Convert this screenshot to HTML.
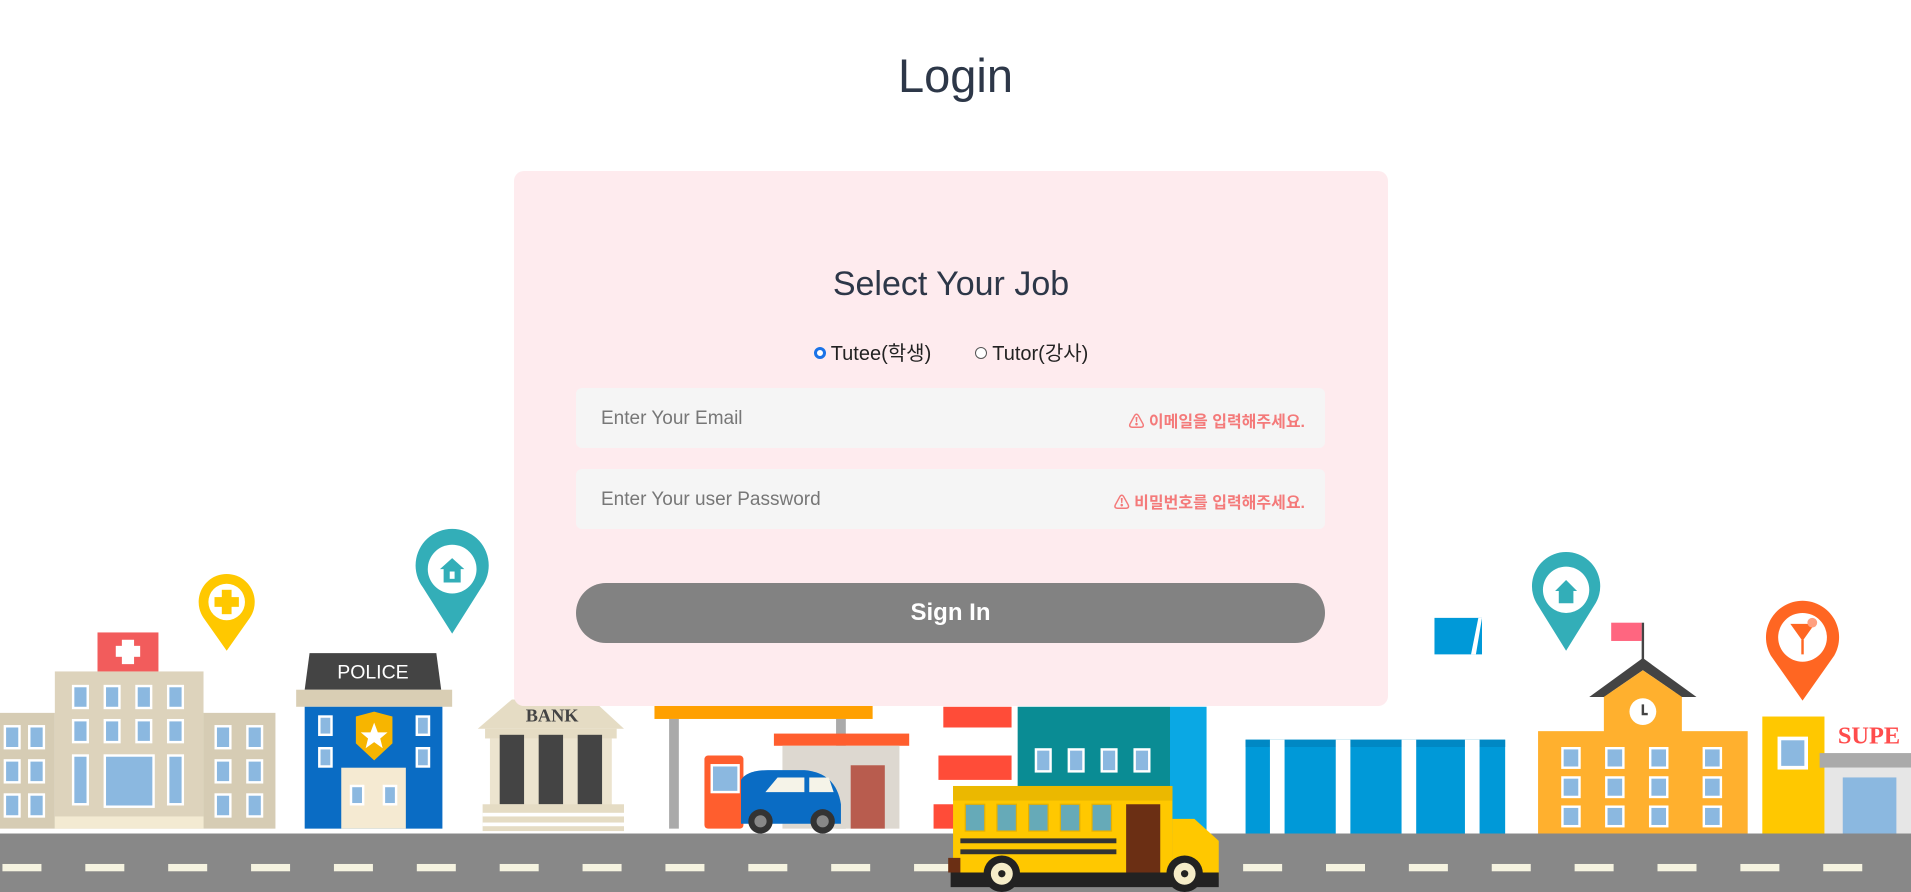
<!DOCTYPE html>
<html><head><meta charset="utf-8"><style>
html,body{margin:0;padding:0;width:1911px;height:892px;overflow:hidden;background:#fff;font-family:"Liberation Sans","Noto Sans CJK KR",sans-serif;}
#city{position:absolute;left:0;top:0;width:1911px;height:892px;}
h1{position:absolute;top:48px;left:0;width:1911px;text-align:center;margin:0;font-size:47px;font-weight:normal;color:#2d3748;}
.card{position:absolute;left:514px;top:171px;width:874px;height:535px;background:#feebee;border-radius:10px;}
.job{position:absolute;top:94px;left:0;width:100%;text-align:center;font-size:34px;color:#2d3748;}
.radios{position:absolute;top:166px;left:0;width:100%;text-align:center;font-size:20px;color:#222;}
.radios span{display:inline-block;margin:0 22px;}
.radios i{display:inline-block;width:12px;height:12px;border:1px solid #555;border-radius:50%;margin-right:5px;vertical-align:1px;background:#fff;box-sizing:border-box}
.radios i.on{border:3px solid #1a73e8;}
.inp{position:absolute;left:62px;width:749px;height:60px;background:#f5f5f5;border-radius:6px;}
.inp .ph{position:absolute;left:25px;top:20px;font-size:19px;color:#777;}
.inp .err{position:absolute;right:20px;top:20px;font-size:16px;color:#f47a7a;font-weight:bold;}
.btn{position:absolute;left:62px;top:412px;width:749px;height:60px;border-radius:30px;background:#828282;color:#fff;text-align:center;line-height:60px;font-size:24px;font-weight:bold;}
</style></head><body>
<svg id="city" viewBox="0 0 1568 732" preserveAspectRatio="none" xmlns="http://www.w3.org/2000/svg">
<rect x="0" y="585" width="45" height="95" fill="#d6ccb4"/>
<rect x="167" y="585" width="59" height="95" fill="#d6ccb4"/>
<rect x="45" y="551" width="122" height="129" fill="#ddd3bc"/>
<rect x="80" y="519" width="50" height="32" fill="#f25c5c"/>
<rect x="100" y="525" width="10" height="20" fill="#fff"/><rect x="95" y="530" width="20" height="9" fill="#fff"/>
<g fill="#8bb8e0" stroke="#fff" stroke-width="2">
<rect x="60" y="563" width="12" height="18"/><rect x="86" y="563" width="12" height="18"/><rect x="112" y="563" width="12" height="18"/><rect x="138" y="563" width="12" height="18"/>
<rect x="60" y="591" width="12" height="18"/><rect x="86" y="591" width="12" height="18"/><rect x="112" y="591" width="12" height="18"/><rect x="138" y="591" width="12" height="18"/>
<rect x="60" y="620" width="12" height="40"/><rect x="86" y="620" width="40" height="42"/><rect x="138" y="620" width="12" height="40"/>
<rect x="4" y="596" width="12" height="18"/><rect x="24" y="596" width="12" height="18"/><rect x="4" y="624" width="12" height="18"/><rect x="24" y="624" width="12" height="18"/><rect x="4" y="652" width="12" height="18"/><rect x="24" y="652" width="12" height="18"/>
<rect x="177" y="596" width="12" height="18"/><rect x="203" y="596" width="12" height="18"/><rect x="177" y="624" width="12" height="18"/><rect x="203" y="624" width="12" height="18"/><rect x="177" y="652" width="12" height="18"/><rect x="203" y="652" width="12" height="18"/>
</g>
<rect x="45" y="670" width="122" height="10" fill="#f3ead2"/>
<path d="M186 534 L167 507 A23 23 0 1 1 205 507 Z" fill="#ffc800"/><circle cx="186" cy="494" r="15" fill="#fff"/><rect x="182" y="484" width="8" height="20" fill="#ffc800"/><rect x="176" y="490" width="20" height="8" fill="#ffc800"/>
<path d="M371 520 L347 482 A30 30 0 1 1 395 482 Z" fill="#33aeb8"/><circle cx="371" cy="467" r="20" fill="#fff"/><path d="M361 467 L371 458 L381 467 L378 467 L378 478 L364 478 L364 467Z" fill="#33aeb8"/><rect x="369" y="469" width="4" height="6" fill="#fff"/>
<path d="M1285 534 L1262 497 A28 28 0 1 1 1308 497 Z" fill="#33aeb8"/><circle cx="1285" cy="484" r="19" fill="#fff"/><path d="M1276 485 L1285 476 L1294 485 L1291 485 L1291 495 L1279 495 L1279 485Z" fill="#33aeb8"/>
<path d="M1479 575 L1453 538 A30 30 0 1 1 1505 538 Z" fill="#ff6622"/><circle cx="1479" cy="523" r="20" fill="#fff"/><path d="M1469 512 L1489 512 L1479 526Z" fill="#ff6622"/><rect x="1478" y="525" width="2" height="12" fill="#ff6622"/><circle cx="1487" cy="511" r="4" fill="#ffa080"/>
<path d="M254 536 L358 536 L362 566 L250 566Z" fill="#444"/>
<text x="306" y="557" font-size="16" fill="#fff" text-anchor="middle" font-family="Liberation Sans">POLICE</text>
<rect x="243" y="566" width="128" height="14" fill="#d9ceb4"/>
<rect x="250" y="580" width="113" height="100" fill="#0a6cc4"/>
<rect x="280" y="630" width="53" height="50" fill="#f5ead2"/>
<g fill="#8bb8e0" stroke="#fff" stroke-width="2"><rect x="262" y="588" width="10" height="15"/><rect x="342" y="588" width="10" height="15"/><rect x="262" y="614" width="10" height="15"/><rect x="342" y="614" width="10" height="15"/><rect x="288" y="645" width="10" height="15"/><rect x="315" y="645" width="10" height="15"/></g>
<path d="M292 588 L307 584 L322 588 L322 610 L307 624 L292 610Z" fill="#f7b500"/><path d="M307 593 L310 601 L318 601 L312 606 L314 614 L307 609 L300 614 L302 606 L296 601 L304 601Z" fill="#fff"/>
<path d="M392 598 L420 574 L486 574 L512 598Z" fill="#e5dcc4"/>
<text x="453" y="592" font-size="15" fill="#444" text-anchor="middle" font-family="Liberation Serif" font-weight="bold">BANK</text>
<rect x="398" y="598" width="108" height="8" fill="#e5dcc4"/>
<rect x="402" y="606" width="100" height="56" fill="#ece4cf"/>
<rect x="410" y="603" width="20" height="57" fill="#444"/><rect x="442" y="603" width="20" height="57" fill="#444"/><rect x="474" y="603" width="20" height="57" fill="#444"/>
<rect x="396" y="660" width="116" height="22" fill="#e5dcc4"/><rect x="396" y="667" width="116" height="3" fill="#fff"/><rect x="396" y="675" width="116" height="3" fill="#fff"/>
<rect x="537" y="578" width="179" height="12" fill="#ffa000"/>
<rect x="549" y="590" width="8" height="90" fill="#aaa"/><rect x="686" y="590" width="8" height="90" fill="#aaa"/>
<rect x="635" y="602" width="111" height="10" fill="#ff5e2e"/>
<rect x="642" y="612" width="96" height="68" fill="#ddd8d0"/>
<rect x="698" y="628" width="28" height="52" fill="#b85c4e"/>
<rect x="578" y="620" width="32" height="60" rx="3" fill="#ff5e2e"/><rect x="584" y="628" width="22" height="22" fill="#8bb8e0" stroke="#fff" stroke-width="2"/>
<path d="M608 640 Q613 632 630 632 L660 632 Q686 634 690 660 L690 676 L608 676Z" fill="#0a6cc4"/>
<path d="M628 650 L638 638 L660 638 L660 650Z" fill="#f5f3e8"/><path d="M664 638 L680 638 L684 650 L664 650Z" fill="#f5f3e8"/>
<circle cx="624" cy="674" r="10" fill="#333"/><circle cx="624" cy="674" r="5" fill="#888"/><circle cx="675" cy="674" r="10" fill="#333"/><circle cx="675" cy="674" r="5" fill="#888"/>
<rect x="774" y="580" width="56" height="17" fill="#ff4c38"/><rect x="770" y="620" width="60" height="20" fill="#ff4c38"/><rect x="766" y="660" width="20" height="20" fill="#ff4c38"/>
<rect x="835" y="580" width="125" height="100" fill="#0a8c94"/><rect x="960" y="580" width="30" height="104" fill="#0aa8e4"/>
<g fill="#8bb8e0" stroke="#fff" stroke-width="2"><rect x="850" y="615" width="12" height="18"/><rect x="877" y="615" width="12" height="18"/><rect x="904" y="615" width="12" height="18"/><rect x="931" y="615" width="12" height="18"/></g>
<rect x="1022" y="607" width="213" height="77" fill="#0099d8"/>
<rect x="1022" y="607" width="213" height="6" fill="#0088c4"/>
<rect x="1042" y="607" width="12" height="77" fill="#fff"/><rect x="1096" y="607" width="12" height="77" fill="#fff"/><rect x="1150" y="607" width="12" height="77" fill="#fff"/><rect x="1202" y="607" width="12" height="77" fill="#fff"/>
<path d="M1177 507 L1216 507 L1216 537 L1177 537Z" fill="#0099d8"/><path d="M1207 537 L1213 507 L1216 507 L1211 537Z" fill="#fff"/>
<rect x="1262" y="600" width="172" height="84" fill="#ffb02e"/>
<rect x="1316" y="568" width="64" height="40" fill="#ffb02e"/>
<path d="M1304 572 L1348 540 L1392 572 L1380 572 L1348 550 L1316 572Z" fill="#444"/>
<path d="M1316 572 L1348 550 L1380 572Z" fill="#ffb02e"/>
<circle cx="1348" cy="584" r="11" fill="#fff"/><path d="M1348 578 L1348 586 L1352 586" stroke="#444" stroke-width="2" fill="none"/>
<rect x="1347" y="511" width="2" height="30" fill="#444"/><rect x="1322" y="511" width="25" height="15" fill="#ff6680"/>
<g fill="#8bb8e0" stroke="#fff" stroke-width="2">
<rect x="1282" y="614" width="14" height="16"/><rect x="1318" y="614" width="14" height="16"/><rect x="1354" y="614" width="14" height="16"/><rect x="1398" y="614" width="14" height="16"/>
<rect x="1282" y="638" width="14" height="16"/><rect x="1318" y="638" width="14" height="16"/><rect x="1354" y="638" width="14" height="16"/><rect x="1398" y="638" width="14" height="16"/>
<rect x="1282" y="662" width="14" height="16"/><rect x="1318" y="662" width="14" height="16"/><rect x="1354" y="662" width="14" height="16"/><rect x="1398" y="662" width="14" height="16"/>
</g>
<rect x="1446" y="588" width="51" height="96" fill="#ffc800"/>
<rect x="1460" y="606" width="22" height="24" fill="#8bb8e0" stroke="#fff" stroke-width="3"/>
<text x="1508" y="610" font-size="20" fill="#ff4c4c" font-family="Liberation Serif" font-weight="bold">SUPE</text>
<rect x="1493" y="618" width="75" height="12" fill="#aaa"/>
<rect x="1497" y="630" width="71" height="54" fill="#e6e6e6"/><rect x="1512" y="638" width="44" height="46" fill="#8bb8e0"/>
<rect x="0" y="684" width="1568" height="48" fill="#888"/>
<g fill="#f5f3e0">
<rect x="2" y="709" width="32" height="6"/><rect x="70" y="709" width="32" height="6"/><rect x="138" y="709" width="32" height="6"/><rect x="206" y="709" width="32" height="6"/><rect x="274" y="709" width="32" height="6"/><rect x="342" y="709" width="32" height="6"/><rect x="410" y="709" width="32" height="6"/><rect x="478" y="709" width="32" height="6"/><rect x="546" y="709" width="32" height="6"/><rect x="614" y="709" width="32" height="6"/><rect x="682" y="709" width="32" height="6"/><rect x="750" y="709" width="32" height="6"/><rect x="1020" y="709" width="32" height="6"/><rect x="1088" y="709" width="32" height="6"/><rect x="1156" y="709" width="32" height="6"/><rect x="1224" y="709" width="32" height="6"/><rect x="1292" y="709" width="32" height="6"/><rect x="1360" y="709" width="32" height="6"/><rect x="1428" y="709" width="32" height="6"/><rect x="1496" y="709" width="32" height="6"/>
</g>
<rect x="782" y="645" width="180" height="75" fill="#ffc800"/>
<rect x="782" y="645" width="180" height="12" fill="#ebb800"/>
<path d="M962 657 L962 720 L1000 720 L1000 690 L980 672 L962 672Z" fill="#ffc800"/>
<rect x="924" y="660" width="28" height="60" fill="#6b2f14"/>
<g fill="#66aab8" stroke="#e6b000" stroke-width="1"><rect x="792" y="660" width="16" height="22"/><rect x="818" y="660" width="16" height="22"/><rect x="844" y="660" width="16" height="22"/><rect x="870" y="660" width="16" height="22"/><rect x="896" y="660" width="16" height="22"/></g>
<rect x="788" y="688" width="128" height="4" fill="#333"/><rect x="788" y="697" width="128" height="4" fill="#333"/>
<rect x="780" y="716" width="220" height="12" fill="#222"/>
<rect x="778" y="704" width="10" height="12" fill="#6b2f14"/>
<circle cx="822" cy="717" r="15" fill="#222"/><circle cx="822" cy="717" r="9" fill="#f5ecc8"/><circle cx="822" cy="717" r="3" fill="#222"/>
<circle cx="972" cy="717" r="15" fill="#222"/><circle cx="972" cy="717" r="9" fill="#f5ecc8"/><circle cx="972" cy="717" r="3" fill="#222"/>
</svg>
<h1>Login</h1>
<div class="card">
<div class="job">Select Your Job</div>
<div class="radios"><span><i class="on"></i>Tutee(학생)</span><span><i></i>Tutor(강사)</span></div>
<div class="inp" style="top:217px"><div class="ph">Enter Your Email</div><div class="err">⚠ 이메일을 입력해주세요.</div></div>
<div class="inp" style="top:298px"><div class="ph">Enter Your user Password</div><div class="err">⚠ 비밀번호를 입력해주세요.</div></div>
<div class="btn">Sign In</div>
</div>
</body></html>
